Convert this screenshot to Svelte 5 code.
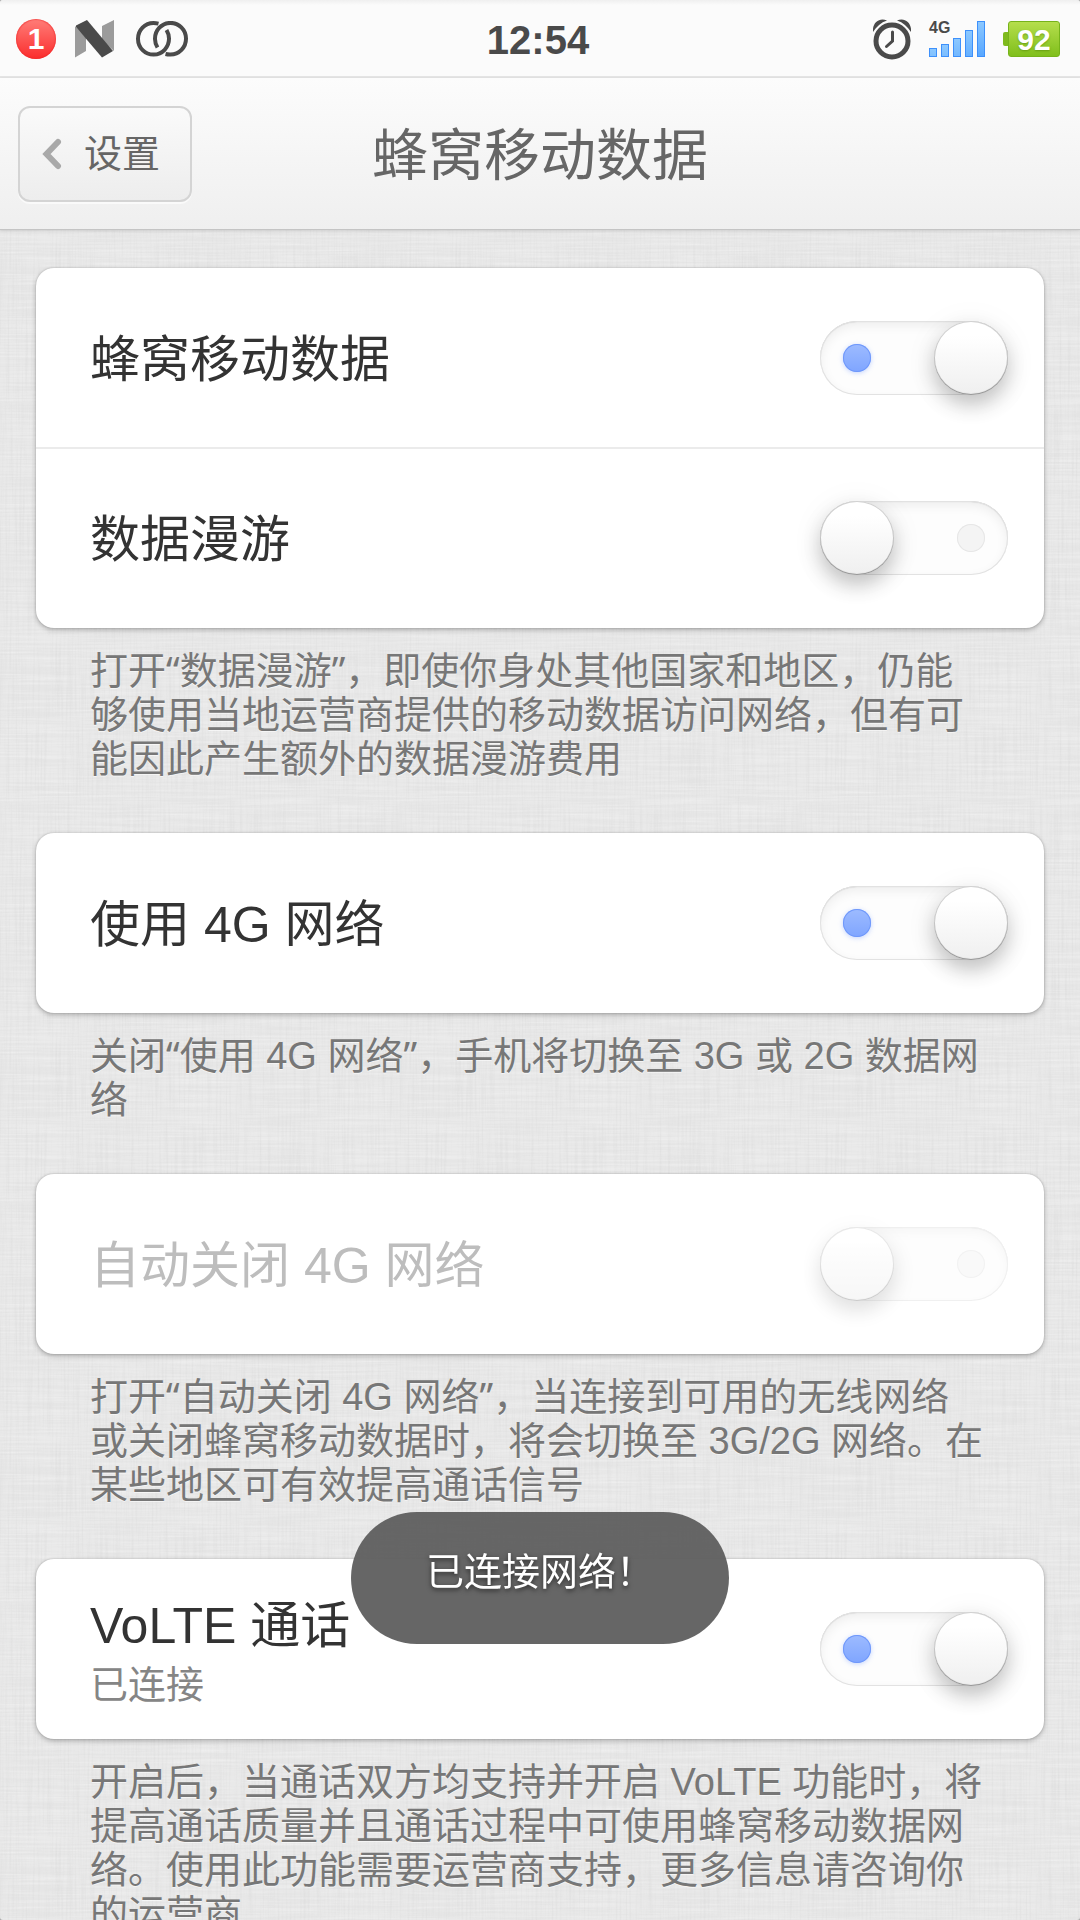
<script lang="ts">
  import { fade } from 'svelte/transition'

  type Row = { id: string, label: string, sub?: string, on: boolean, disabled?: boolean }
  type Group = { rows: Row[], note: string }

  const bars = [9, 13, 19, 27, 36];
  let toast = '已连接网络！';

  let groups: Group[] = [
    {
      rows: [
        { id: 'data', label: '蜂窝移动数据', on: true },
        { id: 'roaming', label: '数据漫游', on: false },
      ],
      note: '打开“数据漫游”，即使你身处其他国家和地区，仍能够使用当地运营商提供的移动数据访问网络，但有可能因此产生额外的数据漫游费用',
    },
    {
      rows: [{ id: 'lte', label: '使用 4G 网络', on: true }],
      note: '关闭“使用 4G 网络”，手机将切换至 3G 或 2G 数据网络',
    },
    {
      rows: [{ id: 'auto', label: '自动关闭 4G 网络', on: false, disabled: true }],
      note: '打开“自动关闭 4G 网络”，当连接到可用的无线网络或关闭蜂窝移动数据时，将会切换至 3G/2G 网络。在某些地区可有效提高通话信号',
    },
    {
      rows: [{ id: 'volte', label: 'VoLTE 通话', sub: '已连接', on: true }],
      note: '开启后，当通话双方均支持并开启 VoLTE 功能时，将提高通话质量并且通话过程中可使用蜂窝移动数据网络。使用此功能需要运营商支持，更多信息请咨询你的运营商',
    },
  ];

  // curly quotes get their own font, so split them out
  function parts(note: string) {
    return note.split(/([“”])/);
  }
</script>

<div class="page" lang="zh-CN">
  <div class="statusBar">
    <div class="left">
      <span class="badge">1</span>
      <svg class="nougat" width="39" height="38" viewBox="0 0 39 38">
        <path d="M0 6 L11 18 V31 L0 37.500Z M27 6 L39 0 V31 L27 20Z" fill="#9b9b9b" />
        <path d="M1 5.500 L12 0 L38 31 L27 37.500 L1 7Z" fill="#4a4a4a" />
      </svg>
      <svg width="52" height="36" viewBox="0 0 52 36" fill="none" stroke="#4a4a4a" stroke-width="4">
        <path d="M22.500 2.600 C20 2 19 2 17.500 2 A15.500 15.800 0 1 0 33 17.500 C33 14 32 11.500 30.500 9" />
        <path d="M29.500 33 C32 33.600 33 33.500 34.500 33.500 A15.500 15.800 0 1 0 19 18 C19 21.500 20 24 21.500 26.500" />
      </svg>
    </div>
    <time>12:54</time>
    <div class="right">
      <svg width="38" height="41" viewBox="0 0 38 41">
        <path d="M0 13 C-1 3 7 -2 14 1.500 C8 3.500 3.500 7.500 0 13Z M38 13 C39 3 31 -2 24 1.500 C30 3.500 34.500 7.500 38 13Z" fill="#4a4a4a" />
        <circle cx="19" cy="22" r="16" fill="none" stroke="#4a4a4a" stroke-width="5" />
        <path d="M19.500 13 V22 L13.500 27.500" fill="none" stroke="#4a4a4a" stroke-width="3" stroke-linecap="round" />
      </svg>
      <div class="signal">
        <span class="net">4G</span>
        {#each bars as h}
          <i style="height: {h}px"></i>
        {/each}
      </div>
      <div class="battery"><span>92</span></div>
    </div>
  </div>

  <header>
    <button class="back">
      <svg width="20" height="32" viewBox="0 0 20 32" fill="none" stroke="#a9a9a9" stroke-width="6" stroke-linecap="round" stroke-linejoin="miter">
        <path d="M16 4 L4.500 16 L16 28" />
      </svg>
      设置
    </button>
    <h1>蜂窝移动数据</h1>
  </header>

  <main>
    {#each groups as group}
      <section>
        <div class="card">
          {#each group.rows as row (row.id)}
            <label class="row" class:disabled={row.disabled}>
              <span class="text">
                <span class="name">{row.label}</span>
                {#if row.sub}
                  <span class="sub">{row.sub}</span>
                {/if}
              </span>
              <input type="checkbox" role="switch" bind:checked={row.on} disabled={row.disabled} />
            </label>
          {/each}
        </div>
        <p>{#each parts(group.note) as part}{#if part === '“' || part === '”'}<span class="quote">{part}</span>{:else}{part}{/if}{/each}</p>
      </section>
    {/each}
  </main>

  {#if toast}
    <div class="toast" role="status" out:fade>{toast}</div>
  {/if}
</div>

<style>
  :global(body) {
    background: #aaa;
  }

  .page {
    display: flex;
    flex-direction: column;
    height: 100vh;
    overflow: hidden;
    border-radius: 3px;
    font-family: "Liberation Sans", "Noto Sans CJK SC", sans-serif;
    color: #333;
    background-color: #e6e6e6;
    /* linen: one layer of vertical threads, one of horizontal */
    background-image:
      url("data:image/svg+xml,%3Csvg xmlns='http://www.w3.org/2000/svg' width='400' height='400'%3E%3Cfilter id='a' x='0' y='0' width='100%25' height='100%25'%3E%3CfeTurbulence type='fractalNoise' baseFrequency='0.5 0.012' numOctaves='3' stitchTiles='stitch'/%3E%3CfeColorMatrix values='0 0 0 0 0.5 0 0 0 0 0.5 0 0 0 0 0.5 0.3 0 0 0 -0.12'/%3E%3C/filter%3E%3Crect width='400' height='400' filter='url(%23a)'/%3E%3C/svg%3E"),
      url("data:image/svg+xml,%3Csvg xmlns='http://www.w3.org/2000/svg' width='400' height='400'%3E%3Cfilter id='b' x='0' y='0' width='100%25' height='100%25'%3E%3CfeTurbulence type='fractalNoise' baseFrequency='0.012 0.5' numOctaves='3' seed='4' stitchTiles='stitch'/%3E%3CfeColorMatrix values='0 0 0 0 1 0 0 0 0 1 0 0 0 0 1 0.6 0 0 0 -0.2'/%3E%3C/filter%3E%3Crect width='400' height='400' filter='url(%23b)'/%3E%3C/svg%3E");
  }

  .statusBar {
    display: grid;
    grid-template-columns: 1fr auto 1fr;
    align-items: center;
    flex: none;
    box-sizing: border-box;
    height: 78px;
    padding: 2px 20px 0 16px;
    border-bottom: 2px solid #e5e5e5;
    background: linear-gradient(#efefef, #fbfbfb 5px);
    color: #4a4a4a;
  }
  .left, .right {
    display: flex;
    align-items: center;
  }
  .left {
    gap: 19px;
  }
  .nougat {
    margin-right: 3px;
  }
  .right {
    justify-content: flex-end;
    gap: 18px;
  }
  .badge {
    width: 40px;
    height: 40px;
    border-radius: 50%;
    background: linear-gradient(#ff7d78, #fb2d2d);
    box-shadow: inset 0 0 1px 1px rgba(240, 40, 40, 0.5);
    color: #fff;
    font-size: 30px;
    font-weight: bold;
    line-height: 40px;
    text-align: center;
  }
  time {
    padding-top: 2px;
    font-size: 40px;
    font-weight: bold;
    line-height: 72px;
  }

  .signal {
    position: relative;
    display: flex;
    align-items: flex-end;
    gap: 4px;
    height: 36px;
  }
  .signal i {
    box-sizing: border-box;
    width: 8px;
    border: 1px solid #3d90fb;
    background: linear-gradient(#8cc8ff, #55a5ff 36px);
  }
  .net {
    position: absolute;
    top: 0;
    left: 0;
    font-size: 16px;
    font-weight: bold;
    line-height: 14px;
  }
  .battery {
    display: flex;
    align-items: center;
  }
  .battery::before {
    content: "";
    width: 5px;
    height: 14px;
    border-radius: 2px 0 0 2px;
    background: #7fba1d;
  }
  .battery span {
    box-sizing: border-box;
    width: 52px;
    height: 36px;
    border: 1px solid #76b31a;
    border-radius: 3px;
    background: linear-gradient(#b5de4c, #80bf1c);
    color: #fff;
    font-size: 30px;
    font-weight: bold;
    line-height: 36px;
    text-align: center;
    text-shadow: 0 1px 2px rgba(70, 120, 0, 0.5);
  }

  header {
    position: relative;
    display: grid;
    grid-template-columns: 1fr auto 1fr;
    align-items: center;
    flex: none;
    box-sizing: border-box;
    height: 152px;
    padding: 0 18px;
    border-bottom: 1px solid #c4c4c4;
    background: linear-gradient(#fcfcfc, #efefef);
    box-shadow: 0 1px 3px rgba(0, 0, 0, 0.12);
    color: #666;
  }
  h1 {
    margin: 0;
    padding-top: 4px;
    font-size: 56px;
    font-weight: normal;
    line-height: 80px;
  }
  .back {
    display: flex;
    align-items: center;
    justify-self: start;
    gap: 22px;
    box-sizing: border-box;
    width: 174px;
    height: 96px;
    padding: 0 22px;
    border: 2px solid #d4d4d4;
    border-radius: 12px;
    background: linear-gradient(#fafafa, #ededed);
    box-shadow: 0 2px 0 #fafafa;
    color: #666;
    font-family: inherit;
    font-size: 38px;
    line-height: 44px;
    white-space: nowrap;
  }
  .back svg {
    flex: none;
  }

  main {
    flex: 1;
    min-height: 0;
    overflow-y: auto;
    scrollbar-width: none;
    padding: 38px 36px 0;
  }
  .card {
    border-radius: 18px;
    background: #fff;
    box-shadow: 0 0 2px rgba(0, 0, 0, 0.2), 0 2px 5px rgba(0, 0, 0, 0.25);
  }
  .row {
    display: flex;
    align-items: center;
    justify-content: space-between;
    box-sizing: border-box;
    height: 180px;
    padding: 0 36px 0 54px;
  }
  .row + .row {
    box-shadow: 0 -1px 0 #ebebeb, inset 0 1px 0 #ebebeb;
  }
  .text {
    display: flex;
    flex-direction: column;
    padding-top: 4px;
  }
  .name {
    font-size: 50px;
    line-height: 68px;
  }
  .sub {
    color: #858585;
    font-size: 38px;
    line-height: 50px;
  }
  .disabled .name {
    color: #bdbdbd;
  }
  p {
    margin: 0;
    padding: 21px 58px 52px 54px;
    color: #777;
    font-size: 38px;
    line-height: 44px;
    text-shadow: 0 1px 0 rgba(255, 255, 255, 0.6);
  }
  .quote {
    font-family: "Noto Sans", sans-serif;
    line-height: 0;
  }

  input {
    appearance: none;
    display: flex;
    flex: none;
    align-items: center;
    justify-content: space-between;
    width: 188px;
    height: 74px;
    margin: 0;
    padding-right: 23px;
    box-sizing: border-box;
    border-radius: 37px;
    background: #fdfdfd;
    box-shadow: inset 0 0 0 1px #e2e2e2, inset 0 1px 1px #ccc, inset 0 4px 12px rgba(0, 0, 0, 0.07);
  }
  input:checked {
    flex-direction: row-reverse;
    padding: 0 0 0 23px;
  }
  input::before {
    content: "";
    width: 74px;
    height: 74px;
    border-radius: 50%;
    background: linear-gradient(#fff 20%, #efefef);
    box-shadow: inset 0 0 0 1px rgba(0, 0, 0, 0.18), inset 0 -1px 1px rgba(0, 0, 0, 0.25), 0 10px 20px rgba(0, 0, 0, 0.22), 0 4px 36px rgba(0, 0, 0, 0.06);
  }
  input::after {
    content: "";
    width: 28px;
    height: 28px;
    border-radius: 50%;
    background: #f4f4f4;
    box-shadow: inset 0 0 0 1px #e6e6e6;
  }
  input:checked::after {
    background: linear-gradient(#9dbbff, #7fa5ff);
    box-shadow: inset 0 0 0 1px #6f98fb, 0 1px 5px rgba(110, 150, 255, 0.4);
  }
  input:disabled {
    opacity: 0.5;
  }

  .toast {
    position: fixed;
    bottom: 276px;
    left: 50%;
    padding: 38px 75px 50px;
    border-radius: 66px;
    background: rgba(96, 96, 96, 0.96);
    color: #fff;
    font-size: 38px;
    line-height: 44px;
    white-space: nowrap;
    text-shadow: 0 2px 5px rgba(0, 0, 0, 0.6);
    transform: translateX(-50%);
  }
</style>
